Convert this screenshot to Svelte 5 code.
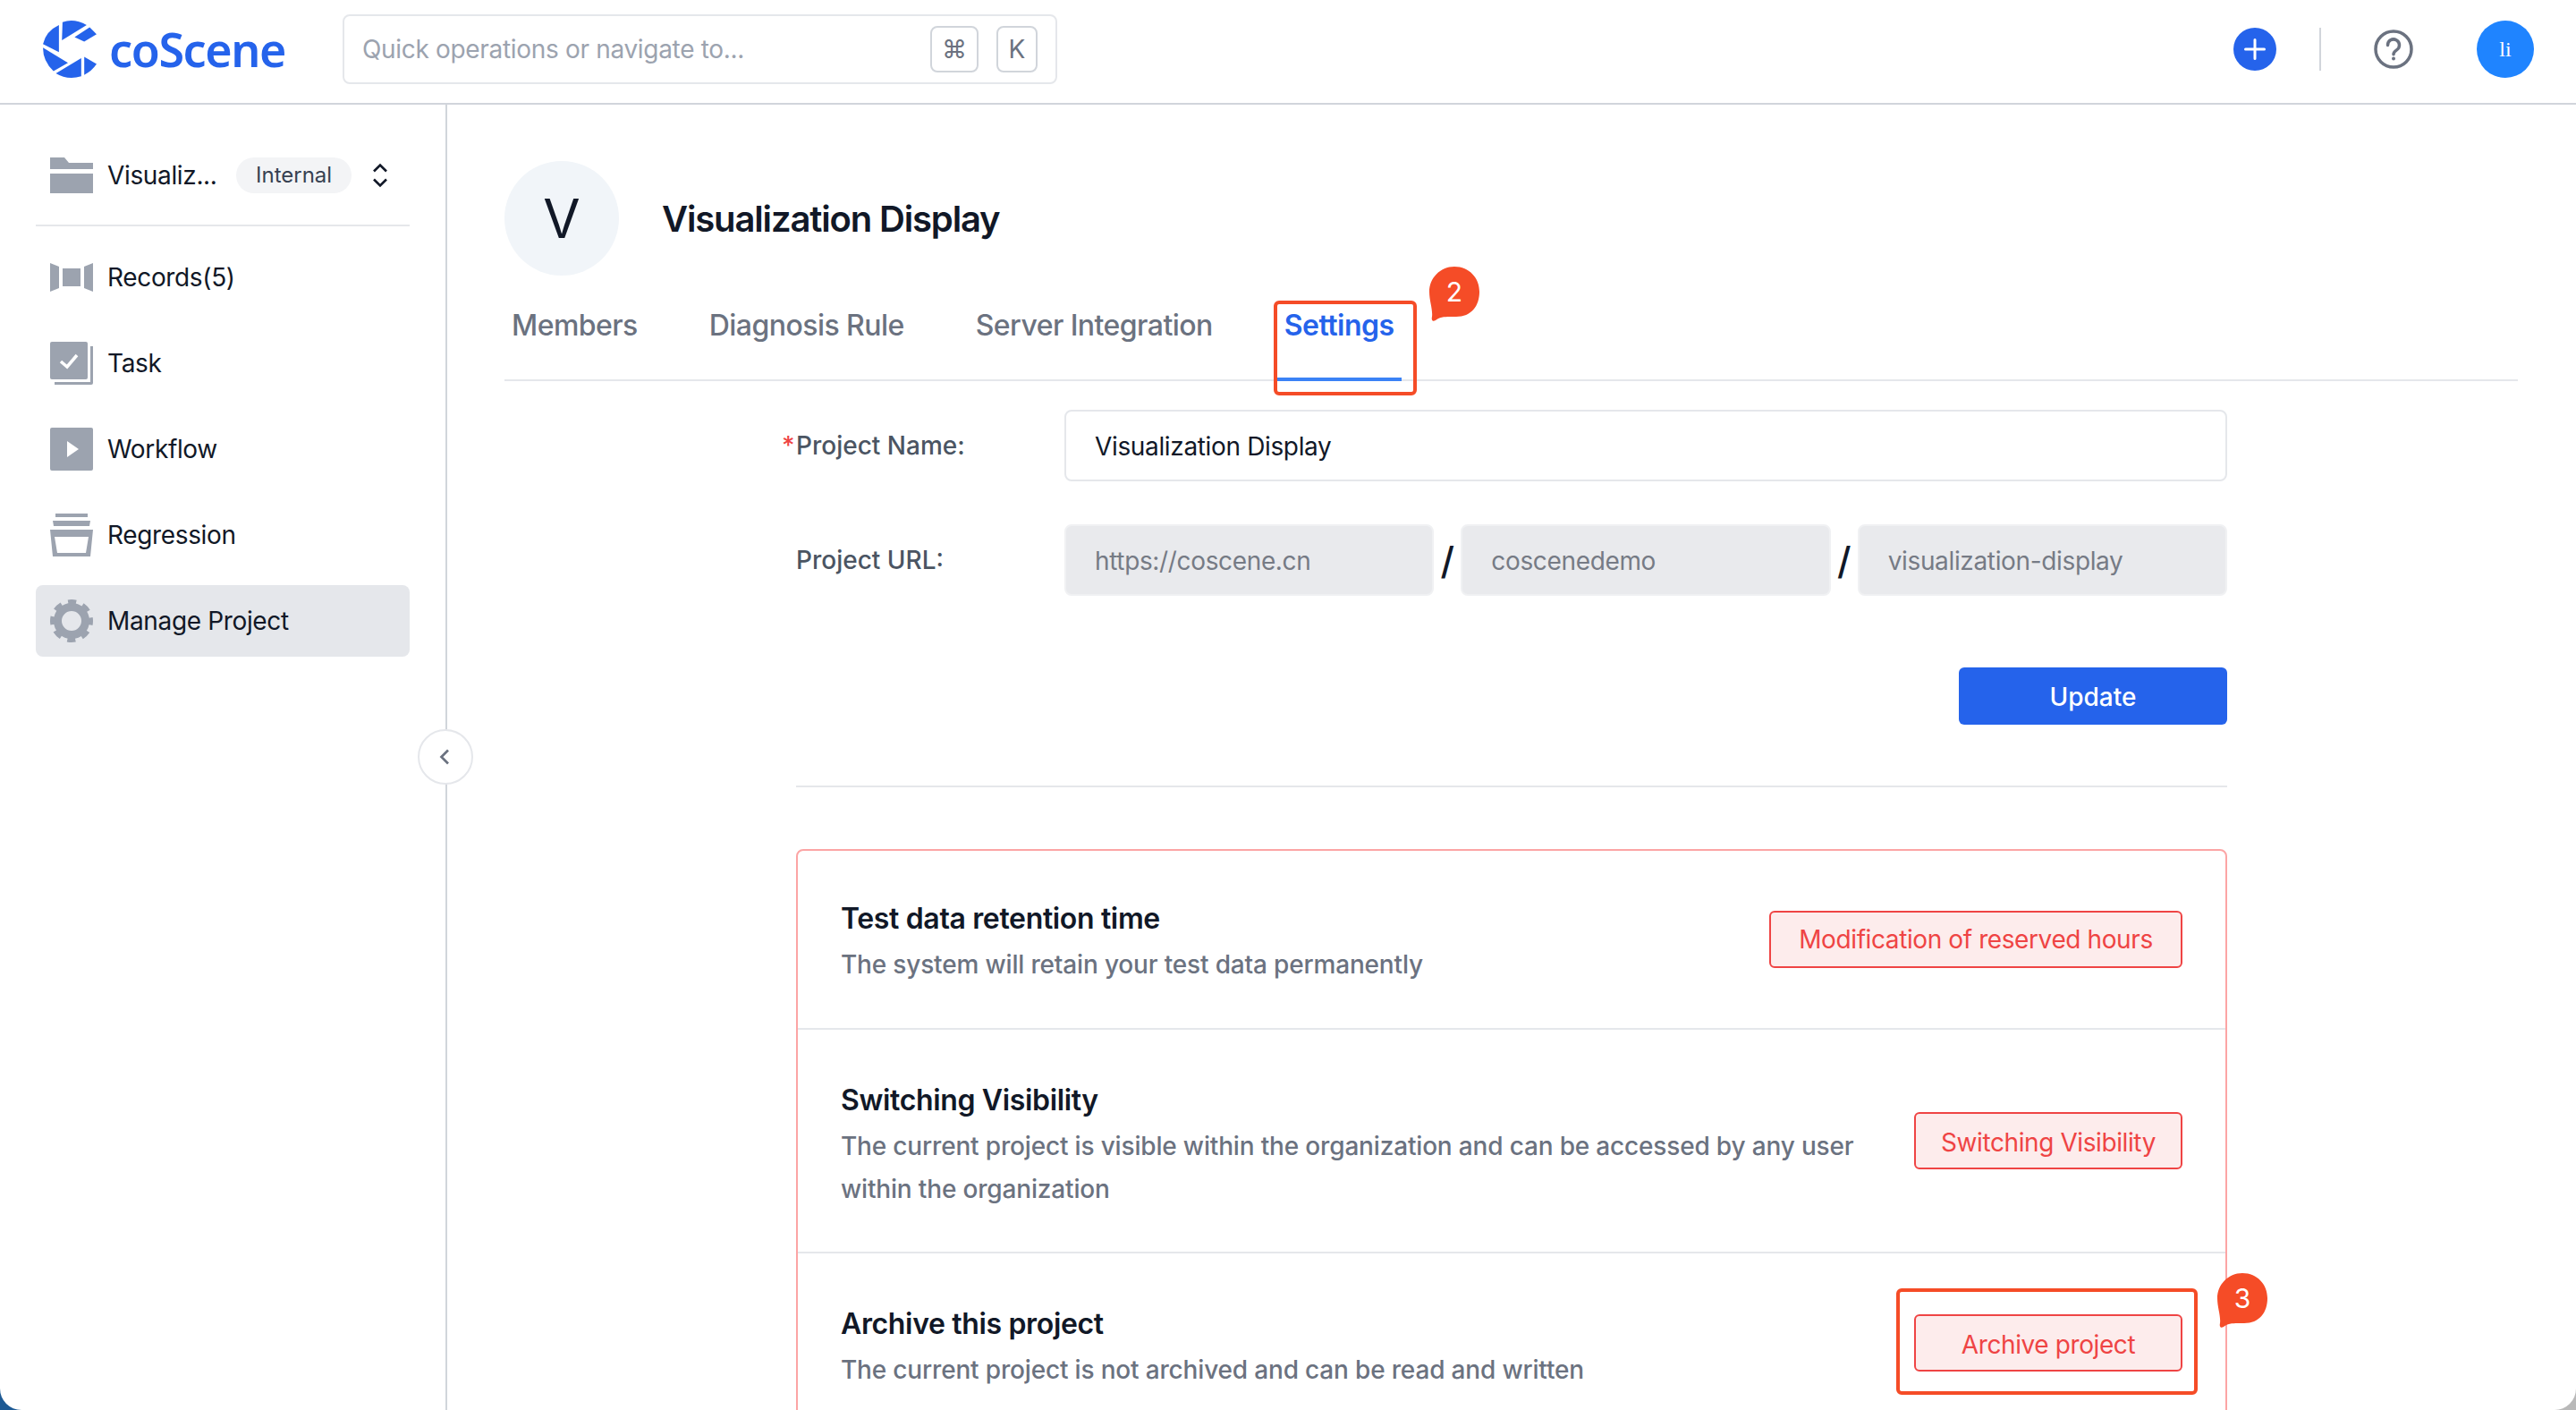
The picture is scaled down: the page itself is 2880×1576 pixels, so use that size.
<script>
  const tabs = ['Members', 'Diagnosis Rule', 'Server Integration'];
  const bubblePath = 'M28 0C45 0 56 13 56 28C56 44 47 56 30 56C22 56 12 55 7 60C4 62 2 60 3 56C4 48 0 38 0 28C0 13 12 0 28 0Z';
</script>

<div class="page">
  <header class="topbar">
    <div class="brand">
      <svg class="mark" viewBox="85 70 178 190" aria-hidden="true">
        <path d="M150 75Q190 62 230 85L148 135Z" />
        <path d="M138 85V175L85 148Q95 105 138 85Z" />
        <path d="M85 160L168 210L120 238Q85 205 85 160Z" />
        <path d="M128 245L212 195V255Q165 268 128 245Z" />
        <path d="M222 190L263 214Q247 238 222 250Z" />
        <path d="M190 125L240 92L263 115L222 140Z" />
      </svg>
      <span class="wordmark">coScene</span>
    </div>
    <div class="search">
      <span class="placeholder">Quick operations or navigate to...</span>
      <kbd class="kbd-cmd">⌘</kbd>
      <kbd class="kbd-k">K</kbd>
    </div>
    <div class="actions">
      <span class="plus">
        <svg viewBox="0 0 48 48" aria-hidden="true"><path d="M24 13.5V34.5M13.5 24H34.5" /></svg>
      </span>
      <span class="vline"></span>
      <svg class="help" viewBox="0 0 44 44" aria-hidden="true">
        <circle cx="22" cy="22" r="20" />
        <path d="M15.5 17.5a6.5 6.5 0 1 1 10 5.4c-2 1.3-3.5 2.4-3.5 4.8" />
        <circle class="dot" cx="22" cy="32.5" r="2" />
      </svg>
      <span class="avatar">li</span>
    </div>
  </header>

  <div class="body">
    <aside class="sidebar">
      <div class="project">
        <svg class="icon folder" viewBox="0 0 48 40" aria-hidden="true">
          <path d="M0 0H16L21 6H48V13H0Z" /><rect y="18" width="48" height="22" />
        </svg>
        <span class="project-name">Visualiz...</span>
        <span class="pill">Internal</span>
        <svg class="updown" viewBox="0 0 20 28" aria-hidden="true"><path d="M3 9.5L10 2.5L17 9.5M3 18.5L10 25.5L17 18.5" /></svg>
      </div>
      <nav class="nav">
        <div class="item">
          <svg class="icon" viewBox="0 0 48 48" aria-hidden="true">
            <path d="M0 8L10 12V36L0 40Z" /><rect x="14" y="14" width="20" height="20" /><path d="M48 8L38 12V36L48 40Z" />
          </svg>
          Records(5)
        </div>
        <div class="item">
          <svg class="icon" viewBox="0 0 48 48" aria-hidden="true">
            <rect width="42" height="42" rx="2" />
            <path d="M45 5H48V46a2 2 0 0 1-2 2H5V45H45Z" />
            <path class="cut" d="M12 22L19 28L30 15" />
          </svg>
          Task
        </div>
        <div class="item">
          <svg class="icon" viewBox="0 0 48 48" aria-hidden="true">
            <path d="M2 0H46a2 2 0 0 1 2 2V46a2 2 0 0 1-2 2H2a2 2 0 0 1-2-2V2a2 2 0 0 1 2-2ZM19 15V33L32 24Z" fill-rule="evenodd" />
          </svg>
          Workflow
        </div>
        <div class="item">
          <svg class="icon" viewBox="0 0 48 48" aria-hidden="true">
            <rect x="6" width="36" height="4" /><path d="M3 8H45L44 14H4Z" />
            <path d="M0 18H48L45 48H3ZM5 26L8 44H40L43 26Z" fill-rule="evenodd" />
          </svg>
          Regression
        </div>
        <div class="item active">
          <svg class="icon gear" viewBox="0 0 48 48" aria-hidden="true">
            <circle class="ring" cx="24" cy="24" r="15.5" />
            <circle class="teeth" cx="24" cy="24" r="21" />
          </svg>
          Manage Project
        </div>
      </nav>
    </aside>

    <main class="main">
      <div class="heading">
        <span class="logo-circle">V</span>
        <h1>Visualization Display</h1>
      </div>
      <div class="tabs">
        {#each tabs as tab}
          <span class="tab">{tab}</span>
        {/each}
        <span class="tab current">Settings</span>
      </div>

      <div class="content">
        <div class="form-row">
          <label class="label required" for="project-name">Project Name:</label>
          <input id="project-name" class="field" value="Visualization Display" />
        </div>
        <div class="form-row">
          <span class="label">Project URL:</span>
          <div class="url">
            <span class="field disabled">https://coscene.cn</span>
            <span class="slash">/</span>
            <span class="field disabled">coscenedemo</span>
            <span class="slash">/</span>
            <span class="field disabled">visualization-display</span>
          </div>
        </div>
        <div class="submit"><button class="update">Update</button></div>
        <hr class="rule" />

        <section class="danger">
          <div class="danger-row first">
            <div class="copy">
              <h2>Test data retention time</h2>
              <p>The system will retain your test data permanently</p>
            </div>
            <button class="danger-btn wide">Modification of reserved hours</button>
          </div>
          <div class="danger-row second">
            <div class="copy">
              <h2>Switching Visibility</h2>
              <p>The current project is visible within the organization and can be accessed by any user within the organization</p>
            </div>
            <button class="danger-btn">Switching Visibility</button>
          </div>
          <div class="danger-row third">
            <div class="copy">
              <h2>Archive this project</h2>
              <p>The current project is not archived and can be read and written</p>
            </div>
            <button class="danger-btn">Archive project</button>
          </div>
        </section>
      </div>
    </main>

    <button class="collapse" aria-label="Collapse">
      <svg viewBox="0 0 16 16" aria-hidden="true"><path d="M10 3L5 8L10 13" /></svg>
    </button>
  </div>

  <span class="mark-box box-settings"></span>
  <span class="bubble bubble-two">
    <svg viewBox="0 0 57 61" aria-hidden="true"><path d={bubblePath} /></svg>
    <span class="bubble-num">2</span>
  </span>
  <span class="mark-box box-archive"></span>
  <span class="bubble bubble-three">
    <svg viewBox="0 0 57 61" aria-hidden="true"><path d={bubblePath} /></svg>
    <span class="bubble-num">3</span>
  </span>
</div>

<style>
  :global(body) {
    margin: 0;
    background: linear-gradient(to right, #1d5a94 50%, #b9b9b9 50%);
  }
  * { box-sizing: border-box; }
  .page {
    position: relative;
    width: 2880px;
    height: 1576px;
    overflow: hidden;
    background: #fff;
    border-radius: 0 0 24px 24px;
    font-family: Inter, "Liberation Sans", sans-serif;
    color: #111827;
  }
  .topbar {
    display: flex;
    align-items: center;
    height: 117px;
    border-bottom: 2px solid #d1d5db;
    padding: 0 47px 5px 48px;
  }
  .brand { display: flex; align-items: center; width: 335px; gap: 14px; }
  .mark { width: 60px; height: 64px; fill: #2563eb; flex: none; }
  .wordmark {
    font-family: "Noto Sans", sans-serif;
    font-size: 52px;
    font-weight: 600;
    line-height: 1;
    color: #2563eb;
    letter-spacing: -1.4px;
  }
  .search {
    display: flex;
    align-items: center;
    width: 799px;
    height: 78px;
    border: 2px solid #e5e7eb;
    border-radius: 8px;
    padding: 0 20px;
  }
  .placeholder { flex: 1; font-size: 28px; color: #9ca3af; letter-spacing: -0.32px; }
  kbd {
    display: flex;
    align-items: center;
    justify-content: center;
    height: 52px;
    border: 2px solid #d1d5db;
    border-radius: 8px;
    font-family: Inter, "DejaVu Sans", sans-serif;
    font-size: 28px;
    color: #6b7280;
  }
  .kbd-cmd { width: 54px; margin-right: 20px; }
  .kbd-k { width: 46px; }
  .actions { display: flex; align-items: center; margin-left: auto; }
  .plus { width: 48px; height: 48px; border-radius: 50%; background: #2563eb; margin-right: 48px; }
  .plus svg { display: block; }
  .plus path { stroke: #fff; stroke-width: 3; stroke-linecap: round; fill: none; }
  .vline { width: 2px; height: 48px; background: #d1d5db; margin-right: 59px; }
  .help { width: 44px; height: 44px; margin-right: 71px; fill: none; stroke: #6b7280; stroke-width: 3.5; }
  .help path { stroke-linecap: round; }
  .help .dot { fill: #6b7280; stroke: none; }
  .avatar {
    display: flex;
    align-items: center;
    justify-content: center;
    width: 64px;
    height: 64px;
    border-radius: 50%;
    background: #1f84ff;
    color: #fff;
    font-family: "Liberation Serif", serif;
    font-size: 24px;
  }

  .body { position: relative; display: flex; height: 1459px; }
  .sidebar {
    width: 500px;
    flex: none;
    border-right: 2px solid #d1d5db;
    padding: 0 40px;
  }
  .project {
    display: flex;
    align-items: center;
    height: 136px;
    padding: 23px 16px 0;
    border-bottom: 2px solid #e5e7eb;
    font-size: 28px;
    letter-spacing: -0.35px;
  }
  .project-name { width: 125px; margin-left: 16px; flex: none; white-space: nowrap; }
  .pill {
    margin-left: 19px;
    padding: 0 22px;
    height: 40px;
    line-height: 40px;
    border-radius: 20px;
    background: #f3f4f6;
    font-size: 24px;
    letter-spacing: 0;
    color: #374151;
  }
  .updown { width: 20px; height: 28px; margin-left: 22px; fill: none; stroke: #111827; stroke-width: 2.6; }
  .icon { width: 48px; height: 48px; flex: none; fill: #9ca3af; }
  .folder { height: 40px; }
  .nav { display: flex; flex-direction: column; gap: 16px; margin-top: 17px; }
  .item {
    display: flex;
    align-items: center;
    gap: 16px;
    height: 80px;
    padding: 0 16px;
    border-radius: 8px;
    font-size: 28px;
    letter-spacing: -0.35px;
  }
  .active { background: #e5e7eb; }
  .cut { fill: none; stroke: #fff; stroke-width: 3.5; }
  .gear { fill: none; stroke: #9ca3af; }
  .ring { stroke-width: 9; }
  .teeth { stroke-width: 6; stroke-dasharray: 9 7.49; stroke-dashoffset: 4.5; }

  .main { flex: 1; min-width: 0; padding: 63px 65px 0 64px; overflow: hidden; }
  .heading { display: flex; align-items: center; gap: 48px; height: 128px; }
  .logo-circle {
    display: flex;
    align-items: center;
    justify-content: center;
    width: 128px;
    height: 128px;
    border-radius: 50%;
    background: #f1f5f9;
    font-size: 60px;
  }
  h1 { margin: 0; font-size: 40px; font-weight: 600; letter-spacing: -1.15px; }
  .tabs {
    display: flex;
    gap: 64px;
    height: 94px;
    margin-top: 24px;
    border-bottom: 2px solid #e5e7eb;
  }
  .tab { padding: 0 8px; line-height: 64px; font-size: 32px; font-weight: 500; letter-spacing: -0.55px; color: #6b7280; }
  .current { height: 94px; border-bottom: 4px solid #3b82f6; color: #2563eb; font-weight: 600; letter-spacing: -0.5px; }
  .content { width: 1600px; margin: 32px 0 0 326px; }
  .form-row { display: grid; grid-template-columns: 300px 1300px; align-items: center; margin-bottom: 48px; }
  .label { position: relative; font-size: 28px; font-weight: 500; color: #4b5563; }
  .required::before { content: "*"; position: absolute; left: -16px; top: 0; color: #ef4444; }
  .field {
    display: flex;
    align-items: center;
    width: 100%;
    height: 80px;
    padding: 2px 32px 0;
    border: 2px solid #e5e7eb;
    border-radius: 8px;
    background: #fff;
    font: inherit;
    font-size: 28px;
    letter-spacing: -0.35px;
    color: #111827;
  }
  .url { display: flex; align-items: center; }
  .disabled { flex: 1; min-width: 0; background: #e9eaed; border-color: #f0f1f3; color: #767b85; }
  .slash { width: 30px; text-align: center; font-size: 42px; font-weight: 500; color: #111827; }
  .submit { display: flex; justify-content: flex-end; margin-top: 80px; }
  .update {
    width: 300px;
    height: 64px;
    padding: 2px 0 0;
    border: 0;
    border-radius: 6px;
    background: #2563eb;
    color: #fff;
    font: inherit;
    font-size: 28px;
    font-weight: 500;
  }
  .rule { height: 2px; margin: 68px 0 69px; border: 0; background: #e5e7eb; }
  .danger { border: 2px solid #fca5a5; border-radius: 8px; }
  .danger-row {
    display: flex;
    align-items: center;
    justify-content: space-between;
    gap: 50px;
    padding: 0 48px;
    border-bottom: 2px solid #e5e7eb;
  }
  .first { height: 200px; }
  .second { height: 250px; }
  .third { height: 200px; border-bottom: 0; }
  .copy { flex: 1; margin-top: 5px; }
  .second .copy, .third .copy { margin-top: 9px; }
  h2 { margin: 0; font-size: 32px; line-height: 48px; font-weight: 600; letter-spacing: -0.35px; }
  p { margin: 3px 0 0; font-size: 28px; line-height: 48px; font-weight: 500; letter-spacing: -0.17px; color: #6b7280; }
  .danger-btn {
    flex: none;
    width: 300px;
    height: 64px;
    padding: 0;
    border: 2px solid #ef4444;
    border-radius: 6px;
    background: #fdecec;
    color: #ef4444;
    font: inherit;
    font-size: 28px;
    letter-spacing: -0.4px;
  }
  .second .danger-btn, .third .danger-btn { padding-top: 3px; }
  .wide { width: 462px; }
  .collapse {
    position: absolute;
    left: 467px;
    top: 698px;
    width: 62px;
    height: 62px;
    padding: 0;
    display: flex;
    align-items: center;
    justify-content: center;
    border: 2px solid #e5e7eb;
    border-radius: 50%;
    background: #fff;
  }
  .collapse svg { width: 24px; height: 24px; fill: none; stroke: #6b7280; stroke-width: 1.8; }

  .mark-box { position: absolute; border: 4px solid #f54c27; border-radius: 6px; }
  .box-settings { left: 1424px; top: 336px; width: 160px; height: 106px; }
  .box-archive { left: 2120px; top: 1440px; width: 337px; height: 119px; }
  .bubble { position: absolute; width: 57px; height: 61px; }
  .bubble svg { display: block; width: 57px; height: 61px; fill: #f54c27; }
  .bubble-num {
    position: absolute;
    left: 0;
    top: 0;
    width: 56px;
    height: 56px;
    line-height: 56px;
    text-align: center;
    color: #fff;
    font-size: 30px;
  }
  .bubble-two { left: 1598px; top: 298px; }
  .bubble-three { left: 2479px; top: 1423px; }
</style>
